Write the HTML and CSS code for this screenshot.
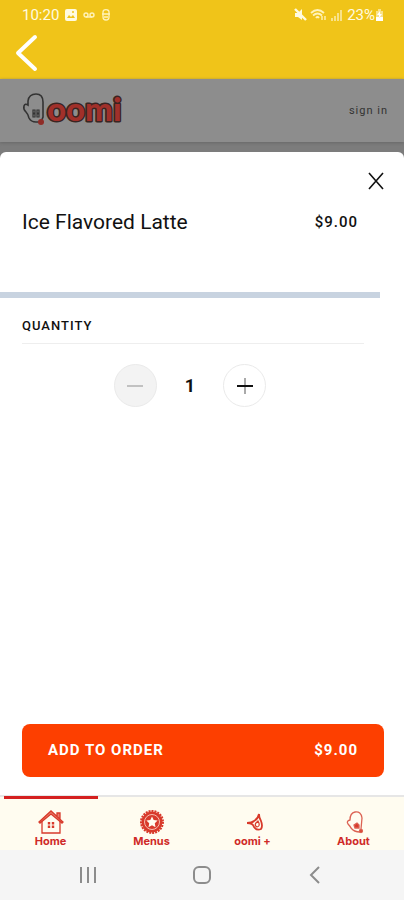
FILE: index.html
```html
<!DOCTYPE html>
<html lang="en">
<head>
    <meta charset="UTF-8">
    <meta name="viewport" content="width=device-width, initial-scale=1.0">
    <title>oomi - Ice Flavored Latte</title>
    <link rel="stylesheet" href="styles.css">
</head>
<body>
    <header class="app-bar">
        <div class="status-bar">
            <div class="status-left">
                <span>10:20</span>
                <svg width="12" height="12" viewBox="0 0 12 12"><rect width="12" height="12" rx="2" fill="#fffbe0"/><path d="M2 9l2-3 2 2 2-2 2 3z" fill="#f0c419"/><circle cx="8" cy="3" r="1" fill="#f0c419"/></svg>
                <svg width="12" height="12" viewBox="0 0 12 12" fill="none" stroke="#fff3b8" stroke-width="1.4"><circle cx="3" cy="6" r="2"/><circle cx="9" cy="6" r="2"/><path d="M3 8h6"/></svg>
                <svg width="10" height="12" viewBox="0 0 10 12" fill="none" stroke="#fff3b8" stroke-width="1.3"><path d="M2 5V3a3 2.3 0 0 1 6 0v2M1 5h8M2 5v3a3 3 0 0 0 6 0V5M3 8h4"/></svg>
            </div>
            <div class="status-right">
                <svg width="13" height="12" viewBox="0 0 13 12"><path d="M1 4h3l4-4v11L4 8H1z" fill="#fffbe0"/><path d="M1 0l11 11" stroke="#fffbe0" stroke-width="2.4"/></svg>
                <svg width="16" height="12" viewBox="0 0 16 12" fill="none" stroke="#fff3b8" stroke-width="1.8"><path d="M0 4q6.500-6 13 0M2 6.500q4.500-4 9 0M5 9q1.500-2 3 0"/><path d="M11 11V7M14 7v4" stroke-width="1.4"/></svg>
                <svg width="12" height="12" viewBox="0 0 12 12" fill="#f8e28a"><path d="M0 9h2v3H0zM3 7h2v5H3zM6 4h2v8H6zM9 1h2v11H9z"/></svg>
                <span class="battery-text">23%</span>
                <svg width="9" height="12" viewBox="0 0 9 12"><path d="M3 0h3v2h2v9q0 1-1 1H2q-1 0-1-1V2h2z" fill="#f8e28a"/><path d="M1 8h7v4H1zM5 2L2 6h2v3l3-4H5z" fill="#fff"/></svg>
            </div>
        </div>
        <button type="button" class="back" aria-label="Back">
            <svg width="22" height="38" viewBox="0 0 22 38" fill="none" stroke="#fff" stroke-width="4" stroke-linecap="round" stroke-linejoin="round"><path d="M19 3L2 19l17 16"/></svg>
        </button>
    </header>

    <div class="site">
        <div class="site-header">
            <a href="#" class="logo" aria-label="oomi">
                <svg width="110" height="40" viewBox="0 0 110 40">
                    <path d="M20 26V11Q20 3 13 3Q6 3 5 10V14Q2 12 1 15Q0 18 3 21Q5 23 6 27Q8 31 13 31H18Z" fill="none" stroke="#333" stroke-width="1.6"/>
                    <path d="M10 19h2v3h-2zM14 19h2v3h-2zM10 23h2v3h-2zM14 23h2v3h-2z" fill="none" stroke="#333" stroke-width="1.2"/>
                    <circle cx="18" cy="31" r="3" fill="#8f2c27"/>
                    <text class="wordmark" x="24" y="30">oomi</text>
                </svg>
            </a>
            <a href="#" class="sign-in">sign in</a>
        </div>

        <main class="sheet">
            <button type="button" class="close" aria-label="Close">
                <svg width="16" height="18" viewBox="0 0 16 18" stroke="#111" stroke-width="1.6"><path d="M1 1l14 16M15 1L1 17"/></svg>
            </button>
            <div class="item">
                <h1>Ice Flavored Latte</h1>
                <span class="price">$9.00</span>
            </div>
            <div class="divider"></div>
            <section class="quantity">
                <h2>QUANTITY</h2>
                <div class="stepper">
                    <button type="button" class="step" id="minus" aria-label="Decrease" disabled>
                        <svg width="16" height="16" viewBox="0 0 16 16"><path d="M0 8h16" stroke="#b0b0b0" stroke-width="1.5"/></svg>
                    </button>
                    <output id="count">1</output>
                    <button type="button" class="step" id="plus" aria-label="Increase">
                        <svg width="16" height="16" viewBox="0 0 16 16"><path d="M8 0v16" stroke="#aaa" stroke-width="2"/><path d="M0 8h16" stroke="#111" stroke-width="2"/></svg>
                    </button>
                </div>
            </section>
            <button type="button" class="add">
                <span>ADD TO ORDER</span>
                <span>$9.00</span>
            </button>
        </main>
    </div>

    <nav class="tabs">
        <a href="#" class="tab active">
            <svg width="26" height="24" viewBox="0 0 26 24" fill="none" stroke="#d83a2b" stroke-width="1.3"><path d="M4 11v12h18V11"/><path d="M1 12L13 1l12 11-1 1L13 4 2 13zM19 6V3h3v6" fill="#e9806f"/><path d="M11 12v6M15 12v6" stroke-width="2.4" stroke-dasharray="2.500 1"/></svg>
            <span>Home</span>
        </a>
        <a href="#" class="tab">
            <svg width="26" height="24" viewBox="0 0 26 24"><circle cx="13" cy="12" r="11" fill="none" stroke="#d83a2b" stroke-width="2" stroke-dasharray="2 1"/><circle cx="13" cy="12" r="10.500" fill="#d83a2b"/><circle cx="13" cy="12" r="7.500" fill="none" stroke="#f6bdb0" stroke-width="1"/><path d="M13 6.500l1.700 3.600 3.900.5-2.800 2.700.7 3.900-3.500-1.900-3.500 1.900.7-3.900-2.800-2.700 3.900-.5z" fill="#fffcf0"/></svg>
            <span>Menus</span>
        </a>
        <a href="#" class="tab">
            <svg width="26" height="24" viewBox="0 0 26 24" fill="none" stroke="#d83a2b" stroke-width="1.800"><path d="M19 4q-1 5-5 7-2 2-7 2 6 0 7 4 3 4 7 2 2-3 0-8-2-3-2-7z"/><path d="M18 11q-5 4-1 6 4-1 1-6z" stroke-width="1.2"/></svg>
            <span>oomi +</span>
        </a>
        <a href="#" class="tab">
            <svg width="26" height="24" viewBox="0 0 26 24" fill="none" stroke="#dc6253" stroke-width="1.300"><path d="M20 19l1-11q-1-7-7-6-5 1-5 8-4 1-2 4 2 2 3 4 3 4 9 4z"/><path d="M13 15l3-2 2 2v3h-4z" fill="#d83a2b"/><circle cx="20" cy="21" r="1.500" fill="#d83a2b"/></svg>
            <span>About</span>
        </a>
    </nav>

    <footer class="system-bar">
        <button type="button" aria-label="Recent apps">
            <svg width="18" height="18" viewBox="0 0 18 18" stroke="#8c8c8c" stroke-width="2"><path d="M2 1v16M9 1v16M16 1v16"/></svg>
        </button>
        <button type="button" aria-label="Home screen">
            <svg width="18" height="18" viewBox="0 0 18 18" fill="none" stroke="#8c8c8c" stroke-width="2"><rect x="1" y="1" width="16" height="16" rx="5"/></svg>
        </button>
        <button type="button" aria-label="System back">
            <svg width="18" height="18" viewBox="0 0 18 18" fill="none" stroke="#8c8c8c" stroke-width="2"><path d="M13 1L5 9l8 8"/></svg>
        </button>
    </footer>

    <script>
        const count = document.getElementById("count");
        const minus = document.getElementById("minus");

        function change(by) {
            const next = Math.max(1, Number(count.textContent) + by);
            count.textContent = next;
            minus.disabled = next === 1;
        }

        minus.addEventListener("click", () => change(-1));
        document.getElementById("plus").addEventListener("click", () => change(1));
    </script>
</body>
</html>
```
FILE: styles.css
```css
* {
    box-sizing: border-box;
}
body {
    margin: 0;
    min-height: 100vh;
    display: flex;
    flex-direction: column;
    font-family: Roboto, "Liberation Sans", sans-serif;
    color: #111;
    background: #fff;
}
button {
    padding: 0;
    border: none;
    background: none;
    font-family: inherit;
    cursor: pointer;
}
a {
    text-decoration: none;
}
svg {
    display: block;
    overflow: visible;
}
.app-bar {
    background: #f0c419;
    padding: 5px 16px 7px;
}
.status-bar {
    display: flex;
    justify-content: space-between;
    padding: 0 4px 0 6px;
    font-size: 15px;
    line-height: 20px;
    color: #fffbe0;
}
.status-left,
.status-right {
    display: flex;
    align-items: center;
    gap: 6px;
}
.status-right {
    gap: 4px;
}
.battery-text {
    margin-right: -4px;
}
.back {
    display: block;
    margin-top: 9px;
}
.site {
    flex: 1;
    display: flex;
    flex-direction: column;
    background: #7c7c7c;
}
.site-header {
    display: flex;
    justify-content: space-between;
    align-items: center;
    height: 63px;
    margin-bottom: 10px;
    padding: 0 16px 0 23px;
    background: #8d8d8d;
    box-shadow: 0 1px 3px #686868;
}
.wordmark {
    font-family: Lato, sans-serif;
    font-size: 33px;
    font-weight: 900;
    fill: #a1302a;
    stroke: #3a2422;
    stroke-width: 3px;
    stroke-linejoin: round;
    paint-order: stroke;
}
.sign-in {
    font-size: 11px;
    letter-spacing: 1px;
    color: #333;
}
.sheet {
    flex: 1;
    display: flex;
    flex-direction: column;
    background: #fff;
    border-radius: 6px 6px 0 0;
}
.close {
    align-self: flex-end;
    margin: 20px 20px 0 0;
}
.item {
    display: flex;
    justify-content: space-between;
    align-items: center;
    padding: 20px 46px 0 22px;
    line-height: 24px;
}
h1 {
    margin: 0;
    font-size: 21px;
    font-weight: 400;
}
.price {
    font-size: 15px;
    font-weight: 500;
    letter-spacing: 1px;
}
.divider {
    height: 6px;
    margin: 58px 24px 0 0;
    background: #c8d3e0;
}
.quantity {
    padding: 20px 40px 0 22px;
}
h2 {
    margin: 0;
    padding-bottom: 9px;
    border-bottom: 1px solid #eee;
    font-size: 13px;
    line-height: 16px;
    font-weight: 500;
    letter-spacing: 1px;
}
.stepper {
    display: flex;
    justify-content: center;
    align-items: center;
    gap: 28px;
    margin: 20px 6px 0 0;
}
.stepper output {
    font-size: 18px;
    font-weight: 700;
}
.step {
    width: 43px;
    height: 43px;
    display: grid;
    place-items: center;
    border: 1px solid #eaeaea;
    border-radius: 50%;
}
.step:disabled {
    background: #f3f3f3;
    cursor: default;
}
.add {
    display: flex;
    justify-content: space-between;
    align-items: center;
    height: 53px;
    margin: auto 20px 18px 22px;
    padding: 0 26px 2px;
    border-radius: 8px;
    background: #fd3f00;
    color: #fff;
    font-size: 15px;
    font-weight: 700;
    letter-spacing: 1px;
}
.tabs {
    display: grid;
    grid-template-columns: repeat(4, 1fr);
    border-top: 2px solid #e6e6e6;
    background: #fffcf0;
}
.tab {
    position: relative;
    display: flex;
    flex-direction: column;
    align-items: center;
    padding: 13px 0 1px;
    font-family: Inter, sans-serif;
    font-size: 11px;
    line-height: 15px;
    font-weight: 700;
    color: #cf2a27;
}
.tab.active::before {
    content: "";
    position: absolute;
    top: -1px;
    left: 4px;
    right: 3px;
    height: 3px;
    background: #d4201f;
}
.system-bar {
    display: flex;
    justify-content: space-between;
    align-items: center;
    height: 50px;
    padding: 0 80px 0 79px;
    background: #f5f5f5;
}
```
